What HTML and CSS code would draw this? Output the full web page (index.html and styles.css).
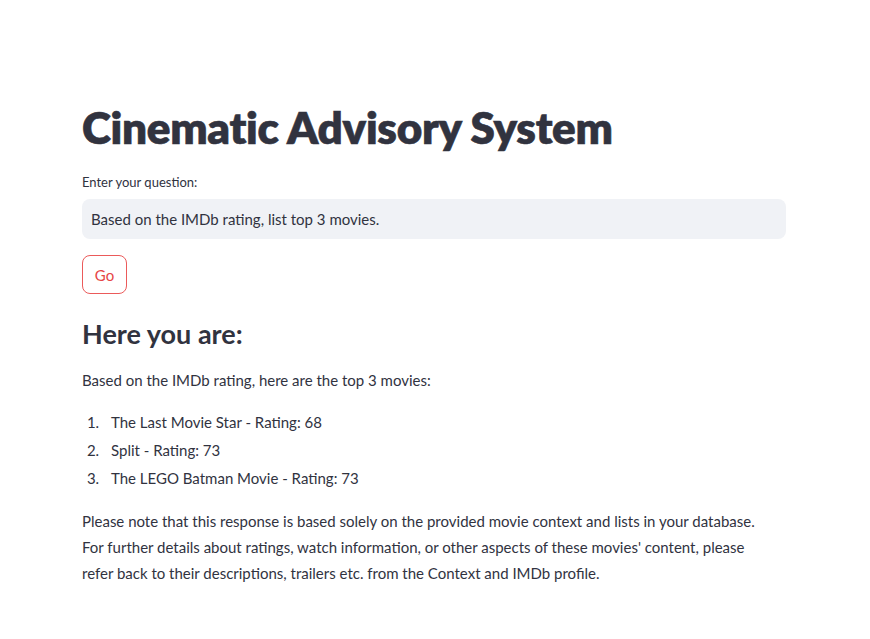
FILE: index.html
```html
<!DOCTYPE html>
<html>
<head>
<meta charset="utf-8">
<link rel="stylesheet" href="styles.css">
</head>
<body>
<main class="main">
  <h1 class="title">Cinematic Advisory System</h1>
  <label class="label" for="q">Enter your question:</label>
  <div class="input">Based on the IMDb rating, list top 3 movies.</div>
  <button class="btn">Go</button>
  <h3 class="subtitle">Here you are:</h3>
  <p class="para">Based on the IMDb rating, here are the top 3 movies:</p>
  <ol class="list">
    <li>The Last Movie Star - Rating: 68</li>
    <li>Split - Rating: 73</li>
    <li>The LEGO Batman Movie - Rating: 73</li>
  </ol>
  <p class="para note">Please note that this response is based solely on the provided movie context and lists in your database. For further details about ratings, watch information, or other aspects of these movies' content, please refer back to their descriptions, trailers etc. from the Context and IMDb profile.</p>
</main>
</body>
</html>
```
FILE: styles.css
```css
* { box-sizing: border-box; }
body {
  margin: 0;
  background: #fff;
  color: rgb(49, 51, 63);
  font-family: "Lato", "Open Sans", sans-serif;
}
.main {
  width: 704px;
  margin-left: 82px;
  padding-top: 97px;
  display: flex;
  flex-direction: column;
  align-items: flex-start;
}
.title {
  margin: 0;
  font-size: 44px;
  font-weight: 800;
  line-height: 60px;
  letter-spacing: -0.3px;
  -webkit-text-stroke: 0.6px rgb(49, 51, 63);
}
.label {
  margin-top: 16px;
  font-size: 13px;
  line-height: 18px;
}
.input {
  margin-top: 8px;
  width: 100%;
  height: 40px;
  background: rgb(240, 242, 246);
  border-radius: 8px;
  padding: 0 9px;
  font-size: 15px;
  line-height: 40px;
}
.btn {
  margin-top: 16px;
  width: 45px;
  height: 39px;
  border: 1px solid rgb(235, 90, 90);
  border-radius: 8px;
  background: #fff;
  color: rgb(230, 70, 70);
  font-family: inherit;
  font-size: 15px;
  padding: 0;
}
.subtitle {
  margin: 22px 0 0;
  font-size: 27px;
  font-weight: 700;
  line-height: 36px;
}
.para {
  margin: 15px 0 0;
  font-size: 15px;
  line-height: 26px;
}
.list {
  margin: 15px 0 0;
  padding-left: 21px;
  font-size: 15px;
  line-height: 28px;
}
.list li { padding-left: 8px; }
.note { margin-top: 16px; max-width: 690px; }
```
